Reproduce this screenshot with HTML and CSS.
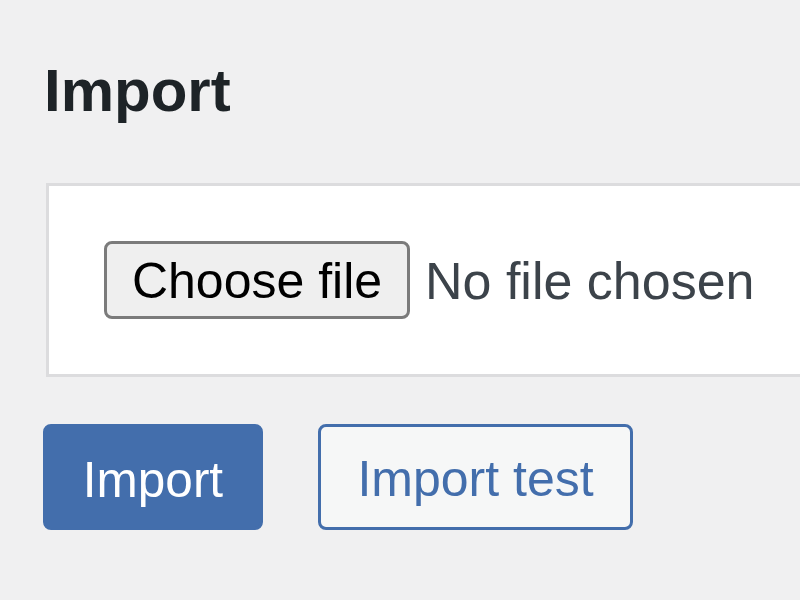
FILE: index.html
```html
<!DOCTYPE html>
<html>
<head>
<meta charset="utf-8">
<link rel="stylesheet" href="styles.css">
</head>
<body>
<div class="wrap">
  <h1 class="title">Import</h1>
  <div class="card">
    <div class="file-row">
      <span class="file-btn">Choose file</span>
      <span class="file-status">No file chosen</span>
    </div>
  </div>
  <div class="actions">
    <button class="btn btn-primary">Import</button>
    <button class="btn btn-secondary">Import test</button>
  </div>
</div>
</body>
</html>
```

FILE: styles.css
```css
html, body {
  margin: 0;
  padding: 0;
  background: #f0f0f1;
  font-family: "Liberation Sans", Arial, sans-serif;
  overflow: hidden;
}
.wrap {
  padding: 61px 0 0 43px;
}
.title {
  margin: 0 0 0 1px;
  font-size: 60px;
  line-height: 60px;
  font-weight: 700;
  color: #1d2327;
}
.card {
  margin: 62px 0 0 3px;
  background: #fff;
  border: 3px solid #dcdcde;
  border-right: none;
  padding: 55px 0 55px 55px;
}
.file-row {
  display: flex;
  align-items: center;
}
.file-btn {
  box-sizing: border-box;
  flex: 0 0 306px;
  height: 78px;
  display: flex;
  align-items: center;
  justify-content: center;
  border: 3px solid #7b7b7b;
  border-radius: 8px;
  background: #efefef;
  color: #000;
  font-size: 50px;
  padding-top: 1px;
  white-space: nowrap;
}
.file-status {
  flex: 0 0 auto;
  margin-left: 15px;
  font-size: 52px;
  color: #3c434a;
  padding-top: 1px;
  white-space: nowrap;
}
.actions {
  display: flex;
  gap: 55px;
  margin-top: 47px;
}
.btn {
  box-sizing: border-box;
  height: 106px;
  border-radius: 8px;
  font-family: "Liberation Sans", Arial, sans-serif;
  padding: 4px 0 0 0;
  cursor: pointer;
}
.btn-primary {
  width: 220px;
  background: #436eac;
  border: 3px solid #436eac;
  color: #fff;
  font-size: 49.5px;
}
.btn-secondary {
  width: 315px;
  background: #f6f7f7;
  border: 3px solid #436eac;
  color: #436eac;
  font-size: 50px;
}
```
